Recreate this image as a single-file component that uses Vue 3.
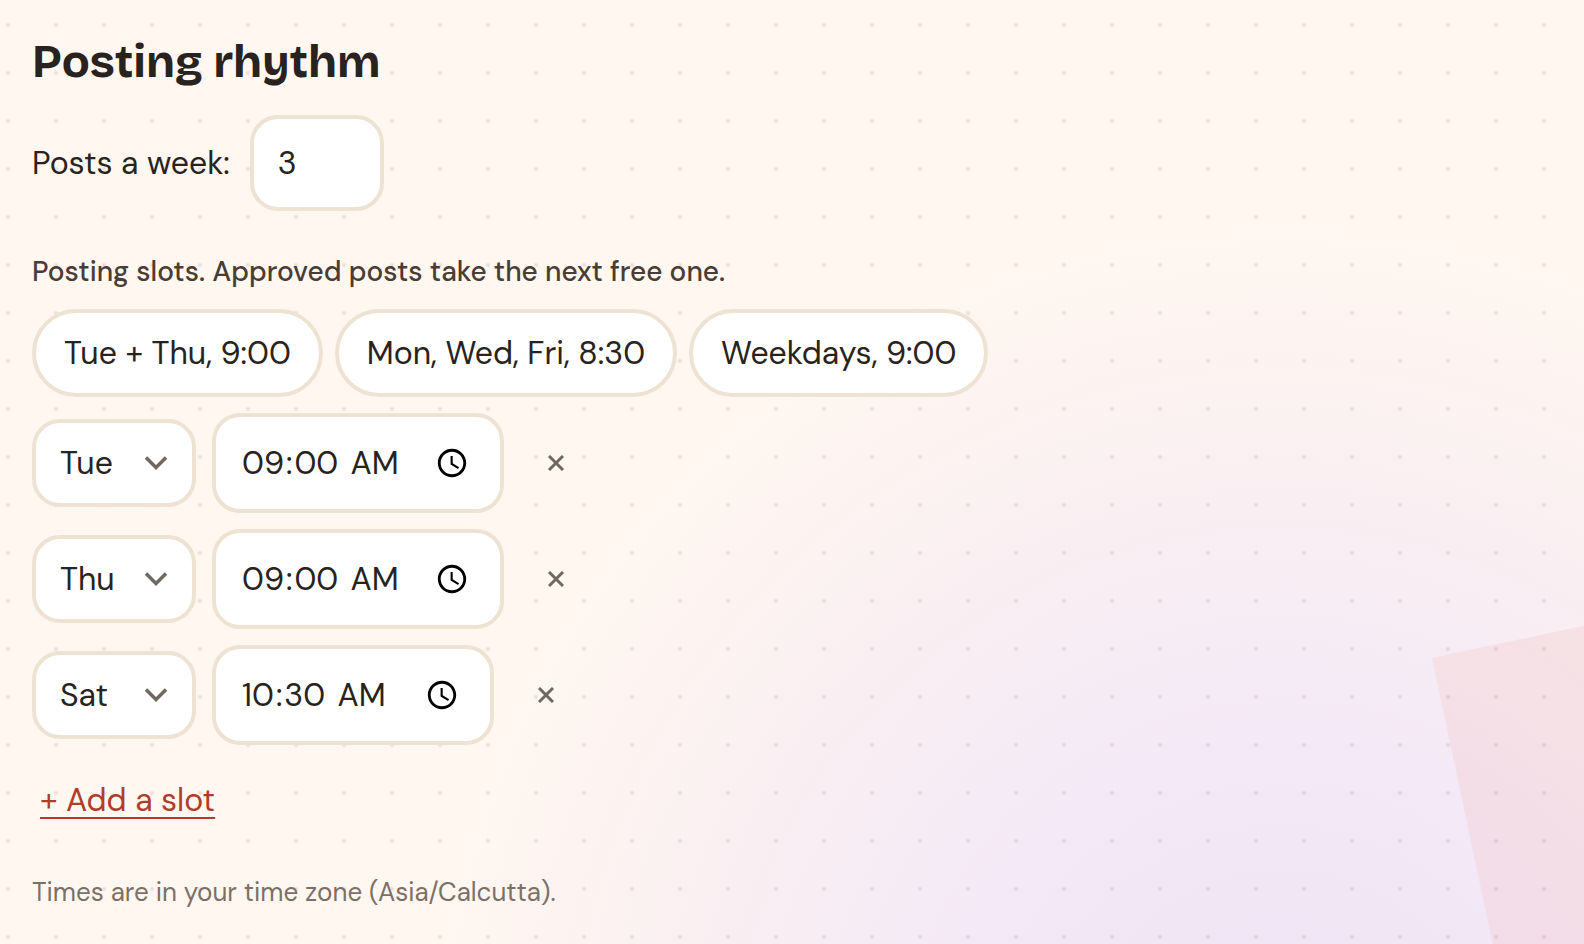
<script setup>
import { ref } from 'vue'

const days = ['Mon', 'Tue', 'Wed', 'Thu', 'Fri', 'Sat', 'Sun']
const presets = [
  { label: 'Tue + Thu, 9:00', days: ['Tue', 'Thu'], time: '09:00' },
  { label: 'Mon, Wed, Fri, 8:30', days: ['Mon', 'Wed', 'Fri'], time: '08:30' },
  { label: 'Weekdays, 9:00', days: ['Mon', 'Tue', 'Wed', 'Thu', 'Fri'], time: '09:00' },
]

const postsPerWeek = ref(3)
let nextId = 4
const slots = ref([
  { id: 1, day: 'Tue', time: '09:00' },
  { id: 2, day: 'Thu', time: '09:00' },
  { id: 3, day: 'Sat', time: '10:30' },
])

function applyPreset(preset) {
  slots.value = preset.days.map((day) => ({ id: nextId++, day, time: preset.time }))
}
function addSlot() {
  slots.value.push({ id: nextId++, day: 'Mon', time: '09:00' })
}
function removeSlot(id) {
  slots.value = slots.value.filter((slot) => slot.id !== id)
}
</script>

<template>
  <main class="page">
    <div class="backdrop" aria-hidden="true"><div class="tile"></div></div>
    <section class="rhythm">
      <h1>Posting rhythm</h1>
      <div class="count">
        <label for="count">Posts a week:</label>
        <input id="count" v-model="postsPerWeek" class="field" type="number" min="1" max="14" />
      </div>
      <p class="intro">Posting slots. Approved posts take the next free one.</p>
      <div class="presets">
        <button v-for="preset in presets" :key="preset.label" type="button" @click="applyPreset(preset)">
          {{ preset.label }}
        </button>
      </div>
      <ul class="slots">
        <li v-for="slot in slots" :key="slot.id">
          <span class="day">
            <select v-model="slot.day" class="field" aria-label="Day">
              <option v-for="day in days" :key="day">{{ day }}</option>
            </select>
            <svg class="chevron" viewBox="0 0 24 16" aria-hidden="true"><path d="M2 2.5 12 12.5 22 2.5" /></svg>
          </span>
          <input v-model="slot.time" class="field time" type="time" aria-label="Time" />
          <button class="remove" type="button" aria-label="Remove slot" @click="removeSlot(slot.id)">
            <svg viewBox="0 0 16 16" aria-hidden="true"><path d="M1 1 15 15M15 1 1 15" /></svg>
          </button>
        </li>
      </ul>
      <button class="add" type="button" @click="addSlot">+ Add a slot</button>
      <p class="zone">Times are in your time zone (Asia/Calcutta).</p>
    </section>
  </main>
</template>

<style>
body {
  background: #fff7f0;
}
</style>

<style scoped>
.page {
  position: relative;
  min-height: 100vh;
  box-sizing: border-box;
  padding: 32px;
  overflow: hidden;
  color: #292320;
  font-family: "DM Sans", Inter, sans-serif;
  font-size: 32px;
  line-height: 48px;
}
.backdrop {
  position: absolute;
  inset: 0;
  overflow: hidden;
  background:
    radial-gradient(circle 3px at 8px 25px, rgba(90, 60, 60, 0.12) 1px, transparent 3px) 0 0 / 48px 48px,
    radial-gradient(circle 860px at 81% calc(100% + 136px), #efe3f4 0%, #f4e9f6 41%, #f7edf3 58%, #faf0f2 72%, #fdf4f1 88%, #fff7f0 100%) #fff7f0;
}
.tile {
  position: absolute;
  top: 658px;
  right: -448px;
  width: 600px;
  height: 600px;
  background: rgba(235, 130, 105, 0.1);
  transform: rotate(-12deg);
  transform-origin: top left;
}
.rhythm {
  position: relative;
  display: flex;
  flex-direction: column;
  align-items: flex-start;
}
h1,
p,
ul {
  margin: 0;
  padding: 0;
}
h1 {
  font-family: "Bricolage Grotesque", Inter, sans-serif;
  font-size: 46px;
  font-weight: 700;
  line-height: 60px;
}
button,
.field {
  box-sizing: border-box;
  color: inherit;
  font: inherit;
}
button {
  cursor: pointer;
}
.field {
  border: 4px solid #eee2d3;
  border-radius: 28px;
  background: #fff;
  padding: 0 24px;
}
.count {
  display: flex;
  align-items: center;
  gap: 20px;
  margin-top: 23px;
}
.count .field {
  width: 134px;
  height: 96px;
  appearance: textfield;
}
.count .field::-webkit-inner-spin-button {
  display: none;
}
.intro {
  margin-top: 40px;
  color: #4a3d35;
  font-size: 28px;
  font-weight: 500;
  line-height: 42px;
}
.presets {
  display: flex;
  flex-wrap: wrap;
  gap: 12px;
  margin-top: 16px;
}
.presets button {
  height: 88px;
  padding: 0 28px;
  border: 4px solid #eee2d3;
  border-radius: 44px;
  background: #fff;
}
.slots {
  display: flex;
  flex-direction: column;
  gap: 16px;
  margin-top: 16px;
  list-style: none;
}
.slots li {
  display: flex;
  align-items: center;
}
.day {
  position: relative;
  margin-right: 16px;
}
.day .field {
  display: block;
  width: 164px;
  height: 88px;
  appearance: none;
}
.chevron {
  position: absolute;
  top: 36px;
  right: 28px;
  width: 24px;
  height: 16px;
  pointer-events: none;
}
.chevron path,
.remove path {
  fill: none;
  stroke: #706860;
  stroke-width: 3.5;
}
.time {
  height: 100px;
  padding-right: 28px;
}
.time::-webkit-datetime-edit {
  box-sizing: content-box;
  flex: none;
  padding-right: 13px;
}
.time::-webkit-datetime-edit-hour-field,
.time::-webkit-datetime-edit-minute-field {
  padding: 0 2px;
}
.time::-webkit-datetime-edit-ampm-field {
  padding: 0 2px 0 6px;
}
.time::-webkit-calendar-picker-indicator {
  margin-left: 28px;
}
.remove {
  display: grid;
  place-items: center;
  width: 64px;
  height: 64px;
  margin-left: 20px;
  padding: 0;
  border: 0;
  background: none;
}
.remove svg {
  width: 16px;
  height: 16px;
}
.remove path {
  stroke-width: 3;
}
.add {
  margin-top: 31px;
  padding: 0 8px;
  border: 0;
  background: none;
  color: #b23c2a;
  text-decoration: underline;
  text-decoration-thickness: 2px;
  text-underline-offset: 6px;
}
.zone {
  margin-top: 48px;
  color: #7c7066;
  font-size: 26px;
  line-height: 40px;
}
</style>
